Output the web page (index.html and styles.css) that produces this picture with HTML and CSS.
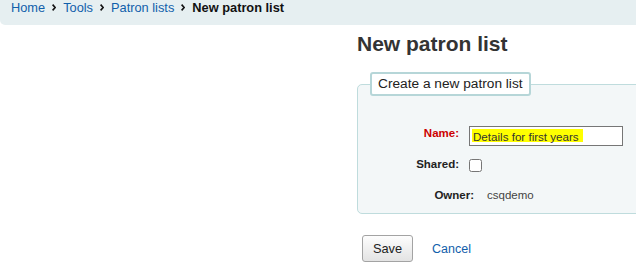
FILE: index.html
```html
<!DOCTYPE html>
<html>
<head>
    <meta charset="utf-8">
    <title>New patron list</title>
    <link rel="stylesheet" href="styles.css">
</head>
<body>
    <nav class="breadcrumbs">
        <a href="#">Home</a>
        <svg class="sep" width="4" height="7" viewBox="0 0 4 7"><polyline points="0.6,0.6 3.2,3.5 0.6,6.4" /></svg>
        <a href="#">Tools</a>
        <svg class="sep" width="4" height="7" viewBox="0 0 4 7"><polyline points="0.6,0.6 3.2,3.5 0.6,6.4" /></svg>
        <a href="#">Patron lists</a>
        <svg class="sep" width="4" height="7" viewBox="0 0 4 7"><polyline points="0.6,0.6 3.2,3.5 0.6,6.4" /></svg>
        <span class="current">New patron list</span>
    </nav>

    <div class="layout">
        <aside class="sidebar"></aside>
        <main class="content">
            <h1>New patron list</h1>
            <form>
                <fieldset class="rows">
                    <legend>Create a new patron list</legend>
                    <ol>
                        <li>
                            <label class="field-label required" for="list-name">Name:</label>
                            <input class="text-input" id="list-name" type="text" value="Details for first years">
                        </li>
                        <li>
                            <label class="field-label" for="list-shared">Shared:</label>
                            <input class="checkbox" id="list-shared" type="checkbox">
                        </li>
                        <li>
                            <span class="field-label static">Owner:</span>
                            <span class="value">csqdemo</span>
                        </li>
                    </ol>
                </fieldset>
                <div class="actions">
                    <button class="btn" type="button">Save</button>
                    <a class="cancel" href="#">Cancel</a>
                </div>
            </form>
        </main>
    </div>
</body>
</html>
```

FILE: styles.css
```css
html, body {
    overflow: hidden;
}

body {
    margin: 0;
    font-family: "Liberation Sans", Arial, sans-serif;
    font-size: 12px;
    color: #333;
    background: #fff;
}

a {
    color: #1160ab;
    text-decoration: none;
}

/* Breadcrumb bar */
.breadcrumbs {
    display: flex;
    align-items: center;
    height: 25px;
    box-sizing: border-box;
    padding: 0 11px 10px;
    background: #e6eff1;
    border-bottom-left-radius: 5px;
    font-size: 12.8px;
    line-height: 15px;
}

.breadcrumbs .sep {
    margin: 0 7px 0 7px;
    fill: none;
    stroke: #111;
    stroke-width: 1.6;
}

.breadcrumbs .current {
    font-weight: bold;
    color: #111;
}

.layout {
    display: grid;
    grid-template-columns: 357px 330px;
}

h1 {
    margin: 6px 0 16px;
    font-size: 21px;
    line-height: 25px;
    color: #333;
}

/* Form fieldset */
fieldset.rows {
    margin: 0;
    padding: 0 12px 11px;
    border: 1px solid #bfdcdd;
    border-radius: 5px;
    background: #f3f7f8;
}

fieldset.rows legend {
    padding: 0 6px;
    border: 2px solid #b6d6d8;
    border-radius: 3px;
    background: #fff;
    font-size: 13.7px;
    line-height: 20px;
    color: #222;
}

fieldset.rows ol {
    margin: 30px 0 0;
    padding: 0;
    list-style: none;
}

fieldset.rows li {
    display: flex;
    align-items: flex-start;
    height: 31px;
}

fieldset.rows li:last-child {
    height: auto;
}

.field-label {
    width: 89px;
    margin-right: 10px;
    text-align: right;
    font-size: 11.5px;
    font-weight: bold;
    line-height: 14px;
    color: #222;
}

.field-label.required {
    color: #c00;
}

.field-label.static {
    width: 104px;
    margin-right: 13px;
}

.value {
    font-size: 11.5px;
    line-height: 14px;
    color: #444;
}

.text-input {
    box-sizing: border-box;
    width: 154px;
    height: 20px;
    margin: 0;
    padding: 0 3px;
    border: 1px solid #767676;
    border-radius: 0;
    background: #fff linear-gradient(#ffff00, #ffff00) no-repeat 2px 2px / 111px 13px;
    font-family: "Liberation Sans", Arial, sans-serif;
    font-size: 11.6px;
    color: #333;
}

.checkbox {
    width: 13px;
    height: 13px;
    margin: 2px 0 0;
}

/* Save / cancel */
.actions {
    display: flex;
    align-items: baseline;
    gap: 19px;
    margin-top: 21px;
    padding-left: 5px;
}

.btn {
    box-sizing: border-box;
    width: 51px;
    height: 27px;
    padding: 0;
    border: 1px solid #a3a3a3;
    border-radius: 3px;
    background: linear-gradient(#fdfdfd, #e3e3e3);
    font-family: "Liberation Sans", Arial, sans-serif;
    font-size: 12.8px;
    color: #222;
}

.cancel {
    font-size: 12.5px;
}
```
